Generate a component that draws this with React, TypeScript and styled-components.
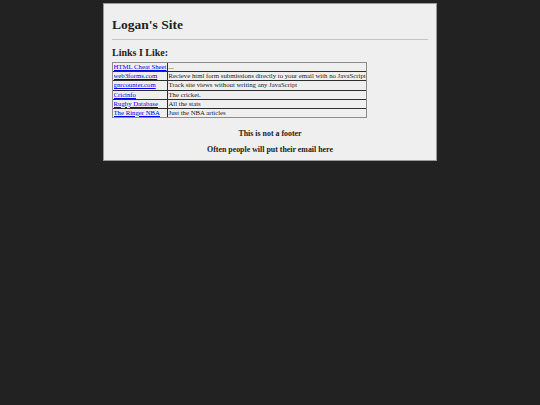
import React from 'react';
import styled, { createGlobalStyle } from 'styled-components';

const GlobalStyle = createGlobalStyle`
    body {
        margin: 3px;
        background: #222222;
        font-family: "Liberation Serif", "Times New Roman", serif;
        color: #222222;
    }
`;

const Page = styled.div`
    width: 316px;
    margin: 0 auto;
    padding: 0 8px;
    background: #efefef;
    border: 1px solid #9a9a9a;
`;

const Title = styled.h1`
    font-size: 13.5px;
    line-height: 16px;
    margin: 13px 0 6px;
`;

const Rule = styled.hr`
    border: none;
    border-top: 1px solid #c4c4c4;
    margin: 0;
`;

const Subtitle = styled.h2`
    font-size: 10px;
    line-height: 12px;
    margin: 7px 0 3px;
`;

const LinkTable = styled.table`
    border-collapse: separate;
    border-spacing: 0;
    border: 1px solid #8c8c8c;
    font-size: 6.75px;
`;

const Row = styled.tr`
    &:not(:last-child) td {
        border-bottom: 1px solid #2e2e2e;
    }
`;

const Cell = styled.td`
    padding: 0 0.5px;
    line-height: 8.17px;
    white-space: nowrap;
    & + & {
        border-left: 1px solid #2e2e2e;
    }
`;

const SiteLink = styled.a`
    display: inline-block;
    width: 53px;
    overflow: hidden;
    white-space: nowrap;
    vertical-align: bottom;
    color: #0000ee;
`;

const Footer = styled.div`
    display: flex;
    flex-direction: column;
    gap: 7px;
    padding: 11px 0 6px;
`;

const Note = styled.h3`
    text-align: center;
    font-size: 7.9px;
    line-height: 9px;
    margin: 0;
`;

const links = [
    { name: 'HTML Cheat Sheet', note: '...' },
    { name: 'web3forms.com', note: 'Recieve html form submissions directly to your email with no JavaScript' },
    { name: 'gnrcounter.com', note: 'Track site views without writing any JavaScript' },
    { name: 'Cricinfo', note: 'The cricket.' },
    { name: 'Rugby Database', note: 'All the stats' },
    { name: 'The Ringer NBA', note: 'Just the NBA articles' },
];

export default function App() {
    return (
        <>
            <GlobalStyle />
            <Page>
                <Title>Logan's Site</Title>
                <Rule />
                <Subtitle>Links I Like:</Subtitle>
                <LinkTable>
                    <tbody>
                        {links.map(link => (
                            <Row key={link.name}>
                                <Cell><SiteLink href="#">{link.name}</SiteLink></Cell>
                                <Cell>{link.note}</Cell>
                            </Row>
                        ))}
                    </tbody>
                </LinkTable>
                <Footer>
                    <Note>This is not a footer</Note>
                    <Note>Often people will put their email here</Note>
                </Footer>
            </Page>
        </>
    );
}
